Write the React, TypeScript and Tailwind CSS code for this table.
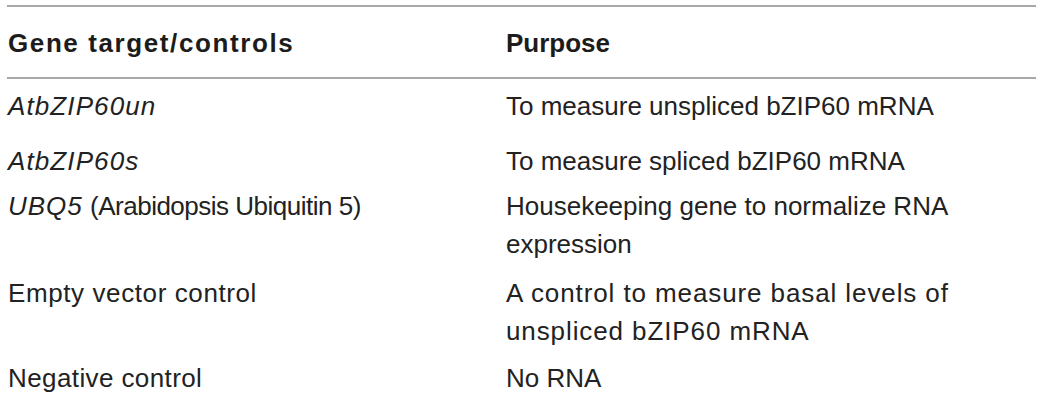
import React from "react";

const rows: { gene: React.ReactNode; purpose: React.ReactNode; cls: string }[] = [
  {
    gene: <i className="tracking-[1.1px]">AtbZIP60un</i>,
    purpose: "To measure unspliced bZIP60 mRNA",
    cls: "pt-[8px] pb-[17px]",
  },
  {
    gene: <i className="tracking-[1.1px]">AtbZIP60s</i>,
    purpose: "To measure spliced bZIP60 mRNA",
    cls: "pb-[7px]",
  },
  {
    gene: (
      <>
        <i className="tracking-[1px]">UBQ5</i>{" "}
        <span className="tracking-[-0.5px]">(Arabidopsis Ubiquitin 5)</span>
      </>
    ),
    purpose: "Housekeeping gene to normalize RNA expression",
    cls: "pb-[11px]",
  },
  {
    gene: <span className="tracking-[0.6px]">Empty vector control</span>,
    purpose: <span className="tracking-[0.9px]">A control to measure basal levels of unspliced bZIP60 mRNA</span>,
    cls: "pb-[9px]",
  },
  {
    gene: <span className="tracking-[0.4px]">Negative control</span>,
    purpose: "No RNA",
    cls: "",
  },
];

export default function App() {
  return (
    <div
      className="w-[1042px] h-[402px] overflow-hidden bg-white pt-[5px] pl-[7px] pr-[6px] text-[#222222] text-[26px] leading-[38px]"
      style={{ fontFamily: '"Liberation Sans", Arial, Helvetica, sans-serif' }}
    >
      <div className="border-t-2 border-[#a8a8a8] grid grid-cols-[499px_480px] pt-[17px] pb-[15px] font-bold text-[#1c1c1c]">
        <div className="pl-[1px] tracking-[1.6px]">Gene target/controls</div>
        <div>Purpose</div>
      </div>
      <div className="border-t-2 border-[#a8a8a8]">
        {rows.map((r, i) => (
          <div key={i} className={`grid grid-cols-[499px_480px] ${r.cls}`}>
            <div className="pl-[1px]">{r.gene}</div>
            <div>{r.purpose}</div>
          </div>
        ))}
      </div>
    </div>
  );
}
